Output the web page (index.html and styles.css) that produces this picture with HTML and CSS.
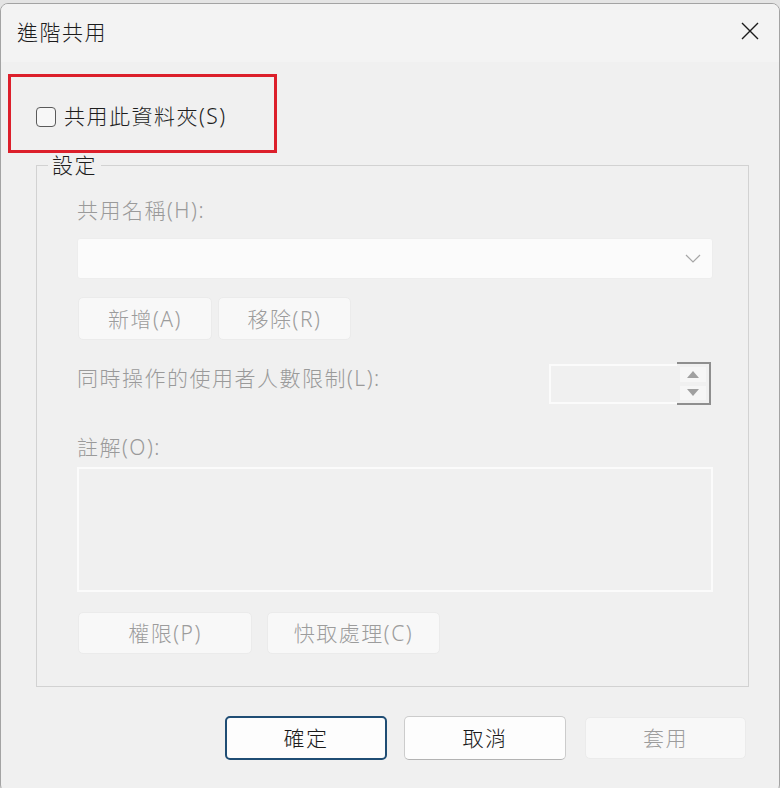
FILE: index.html
```html
<!DOCTYPE html>
<html lang="zh-Hant">
<head>
<meta charset="utf-8">
<title>進階共用</title>
<link rel="stylesheet" href="styles.css">
</head>
<body>
<div class="window">
  <div class="titlebar">
    <span class="title">進階共用</span>
    <span class="close">
      <svg width="18" height="18" viewBox="0 0 18 18"><path d="M1 1L17 17M17 1L1 17" stroke="#1a1a1a" stroke-width="1.4" fill="none"/></svg>
    </span>
  </div>
  <div class="content">
    <div class="highlight">
      <label class="check"><span class="box"></span><span>共用此資料夾(S)</span></label>
    </div>
    <fieldset class="group">
      <legend>設定</legend>
      <div class="group-body">
        <div class="label">共用名稱(H):</div>
        <div class="combo">
          <svg class="chev" width="16" height="9" viewBox="0 0 16 9"><path d="M1 1L8 8L15 1" stroke="#a6a6a6" stroke-width="1.2" fill="none"/></svg>
        </div>
        <div class="btn-row first">
          <span class="btn dis w134">新增(A)</span>
          <span class="btn dis w133">移除(R)</span>
        </div>
        <div class="spin-row">
          <span class="label">同時操作的使用者人數限制(L):</span>
          <div class="spin">
            <div class="spin-field"></div>
            <div class="spin-buttons">
              <span class="spin-btn"><span class="tri-up"></span></span>
              <span class="spin-btn"><span class="tri-down"></span></span>
            </div>
          </div>
        </div>
        <div class="label memo-label">註解(O):</div>
        <div class="memo"></div>
        <div class="btn-row second">
          <span class="btn dis w174">權限(P)</span>
          <span class="btn dis w173">快取處理(C)</span>
        </div>
      </div>
    </fieldset>
    <div class="footer">
      <span class="btn ok">確定</span>
      <span class="btn cancel">取消</span>
      <span class="btn dis apply">套用</span>
    </div>
  </div>
</div>
</body>
</html>
```
FILE: styles.css
```css
html, body {
  margin: 0;
  padding: 0;
  background: #e4e4e4;
  overflow: hidden;
}
body {
  font-family: "Noto Sans", "Noto Sans CJK TC", sans-serif;
  font-size: 21px;
  font-weight: 300;
  letter-spacing: 1.5px;
  color: #1a1a1a;
}
.window {
  margin-top: 3px;
  width: 780px;
  height: 790px;
  box-sizing: border-box;
  border: 1px solid #a3a3a3;
  border-radius: 8px;
  background: #f0f0f0;
  overflow: hidden;
  display: flex;
  flex-direction: column;
}
.titlebar {
  height: 58px;
  background: #f3f3f3;
  display: flex;
  align-items: center;
  padding-left: 16px;
  padding-right: 20px;
}
.title {
  flex: 1;
  line-height: 24px;
  margin-bottom: 2px;
  color: #1b1b1b;
}
.close {
  display: flex;
  margin-bottom: 4px;
}
.content {
  display: flex;
  flex-direction: column;
}
.highlight {
  margin: 12px 0 0 7px;
  width: 269px;
  height: 79px;
  box-sizing: border-box;
  border: 3px solid #dc1f2b;
  padding: 27px 0 0 25px;
}
.check {
  display: flex;
  align-items: center;
  line-height: 24px;
  gap: 8px;
  color: #1e1e1e;
}
.box {
  width: 20px;
  height: 20px;
  box-sizing: border-box;
  border: 1.5px solid #5a5a5a;
  border-radius: 4px;
  background: #f7f7f7;
  margin-top: 2px;
}
.group {
  margin: 0 0 0 35px;
  padding: 0;
  width: 713px;
  box-sizing: border-box;
  border: 1px solid #d2d2d2;
  min-width: 0;
}
.group legend {
  margin-left: 11px;
  padding: 0 4px;
  line-height: 24px;
  color: #1e1e1e;
}
.group-body {
  padding: 21px 35px 32px 40px;
  display: flex;
  flex-direction: column;
}
.label {
  line-height: 24px;
  color: #9a9a9a;
}
.combo {
  margin-top: 16px;
  height: 41px;
  box-sizing: border-box;
  background: #fbfbfb;
  border: 1px solid #ededed;
  border-radius: 3px;
  display: flex;
  align-items: center;
  justify-content: flex-end;
  padding-right: 11px;
}
.btn {
  display: flex;
  align-items: center;
  justify-content: center;
  box-sizing: border-box;
  border-radius: 5px;
  line-height: 24px;
}
.btn.dis {
  background: #f8f8f8;
  border: 1px solid #ebebeb;
  color: #9c9c9c;
}
.btn-row {
  display: flex;
}
.btn-row.first {
  margin-top: 18px;
  gap: 6px;
  padding-left: 1px;
}
.btn-row.first .btn { height: 43px; }
.w134 { width: 134px; }
.w133 { width: 133px; }
.btn-row.second {
  margin-top: 20px;
  gap: 15px;
  padding-left: 1px;
}
.btn-row.second .btn { height: 42px; }
.w174 { width: 174px; }
.w173 { width: 173px; }
.spin-row {
  margin-top: 22px;
  height: 43px;
  display: flex;
  align-items: flex-start;
}
.spin-row .label {
  margin-top: 4px;
}
.spin {
  margin-left: auto;
  margin-right: 2px;
  display: flex;
}
.spin-field {
  margin-top: 2px;
  width: 128px;
  height: 40px;
  box-sizing: border-box;
  border: 2px solid #fbfbfb;
  border-right: none;
}
.spin-buttons {
  width: 34px;
  height: 43px;
  box-sizing: border-box;
  border: 2px solid #8e8e8e;
  border-left: none;
  display: flex;
  flex-direction: column;
  gap: 4px;
  padding: 3px;
}
.spin-btn {
  flex: 1;
  background: #f6f6f6;
  display: flex;
  align-items: center;
  justify-content: center;
}
.tri-up {
  width: 0;
  height: 0;
  border-left: 6px solid transparent;
  border-right: 6px solid transparent;
  border-bottom: 7px solid #a0a0a0;
}
.tri-down {
  width: 0;
  height: 0;
  border-left: 6px solid transparent;
  border-right: 6px solid transparent;
  border-top: 7px solid #a0a0a0;
}
.memo-label {
  margin-top: 30px;
}
.memo {
  margin-top: 8px;
  height: 125px;
  box-sizing: border-box;
  border: 2px solid #fbfbfb;
}
.footer {
  margin-top: 29px;
  display: flex;
  justify-content: flex-end;
  padding-right: 33px;
}
.footer .btn {
  width: 162px;
  height: 44px;
  color: #1a1a1a;
}
.btn.ok {
  background: #fdfdfd;
  border: 2px solid #1f4d74;
}
.btn.cancel {
  margin-left: 17px;
  background: #fdfdfd;
  border: 1px solid #cccccc;
  border-bottom-color: #b3b3b3;
}
.footer .btn.apply {
  margin-left: 19px;
  width: 161px;
  height: 42px;
  margin-top: 1px;
  color: #9c9c9c;
}
```
